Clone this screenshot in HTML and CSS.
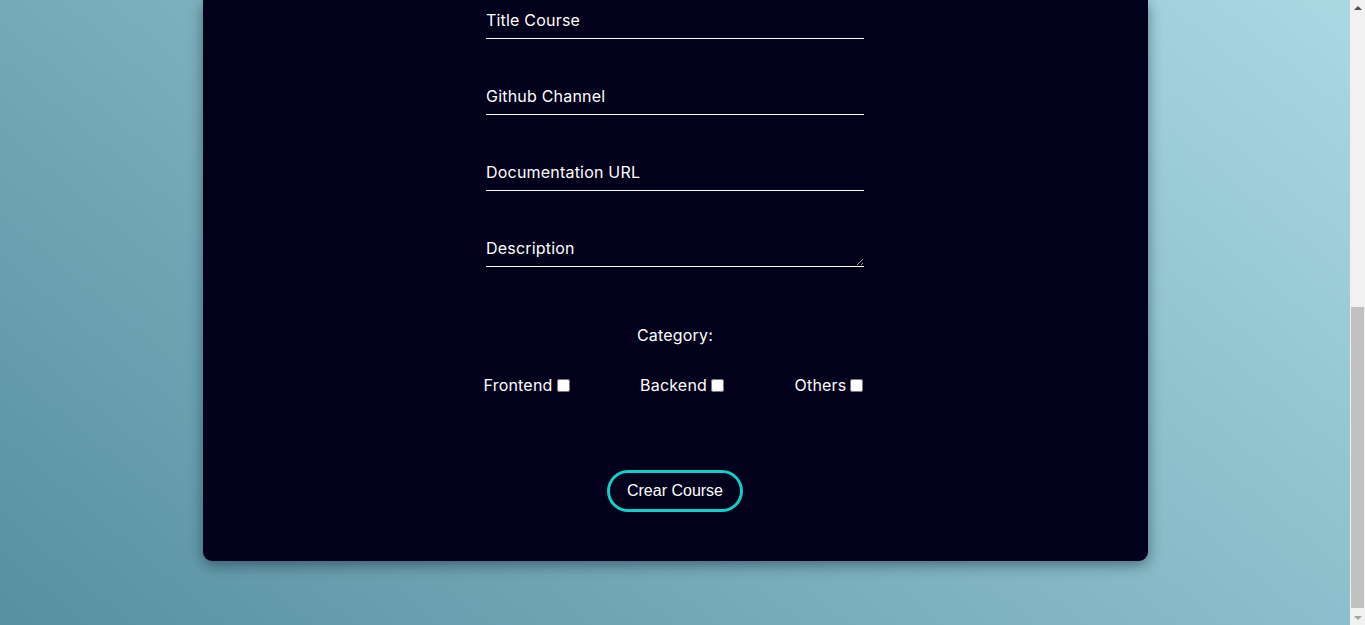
FILE: index.html
```html
<!DOCTYPE html>
<html lang="en">
<head>
<meta charset="utf-8">
<title>Create Course</title>
<link rel="stylesheet" href="styles.css">
</head>
<body>
<div class="window">
  <main class="page">
    <form class="card">
      <div class="fields">
        <input class="field" type="text" placeholder="Title Course">
        <input class="field" type="text" placeholder="Github Channel">
        <input class="field" type="text" placeholder="Documentation URL">
        <textarea class="field area" rows="1" placeholder="Description"></textarea>
      </div>
      <p class="category-label">Category:</p>
      <div class="category-row">
        <label class="check">Frontend<input type="checkbox"></label>
        <label class="check">Backend<input type="checkbox"></label>
        <label class="check">Others<input type="checkbox"></label>
      </div>
      <div class="actions">
        <button class="submit" type="button">Crear Course</button>
      </div>
    </form>
  </main>
  <div class="scrollbar" aria-hidden="true">
    <div class="sb-btn"><span class="arrow-up"></span></div>
    <div class="sb-track"><div class="sb-thumb"></div></div>
    <div class="sb-btn"><span class="arrow-down"></span></div>
  </div>
</div>
</body>
</html>
```
FILE: styles.css
```css
html, body {
  margin: 0;
  height: 100%;
  overflow: hidden;
}
body {
  font-family: "Inter", "Open Sans", sans-serif;
  color: #fff;
}
.window {
  display: flex;
  height: 100%;
}
.page {
  flex: 1;
  background: linear-gradient(40deg, #5890a0 0%, #a9d9e3 100%);
}
.card {
  width: 70%;
  margin: 0 auto;
  background: #02001b;
  border-radius: 0 0 9px 9px;
  box-shadow: 0 4px 14px rgba(0, 20, 40, 0.45);
  padding: 5px 0 49px;
  display: flex;
  flex-direction: column;
  align-items: center;
}
.fields {
  width: 40%;
  display: flex;
  flex-direction: column;
  gap: 42px;
}
.field {
  display: block;
  width: 100%;
  box-sizing: border-box;
  height: 34px;
  padding: 0 0 3px;
  background: transparent;
  border: none;
  border-bottom: 1px solid #fff;
  color: #fff;
  font-family: inherit;
  font-size: 16px;
  letter-spacing: 0.2px;
  line-height: 22px;
  outline: none;
}
.field::placeholder {
  color: #fff;
  opacity: 1;
}
.area {
  padding-top: 4px;
  resize: vertical;
}
.category-label {
  margin: 57px 0 0;
  font-size: 16px;
  letter-spacing: 0.2px;
  line-height: 22px;
}
.category-row {
  width: 383px;
  margin-top: 28px;
  display: flex;
  justify-content: space-between;
}
.check {
  display: flex;
  align-items: center;
  font-size: 16px;
  letter-spacing: 0.2px;
  line-height: 22px;
}
.check input {
  margin: 3px 3px 3px 4px;
  width: 13px;
  height: 13px;
}
.actions {
  margin-top: 74px;
}
.submit {
  background: transparent;
  color: #fff;
  border: 3px solid #10cfc8;
  border-radius: 22px;
  padding: 9px 17px;
  font-family: "Liberation Sans", Arial, sans-serif;
  font-size: 16px;
  line-height: 18px;
  cursor: pointer;
}
.scrollbar {
  width: 15px;
  background: #f1f1f1;
  display: flex;
  flex-direction: column;
}
.sb-btn {
  height: 15px;
  display: flex;
  align-items: center;
  justify-content: center;
}
.arrow-up {
  width: 0;
  height: 0;
  border-left: 4px solid transparent;
  border-right: 4px solid transparent;
  border-bottom: 4px solid #505050;
}
.arrow-down {
  width: 0;
  height: 0;
  border-left: 4px solid transparent;
  border-right: 4px solid transparent;
  border-top: 4px solid #a3a3a3;
}
.sb-track {
  flex: 1;
  display: flex;
  flex-direction: column;
  justify-content: flex-end;
  padding: 0 1px 2px 1px;
}
.sb-thumb {
  height: 301px;
  background: #c1c1c1;
}
```
